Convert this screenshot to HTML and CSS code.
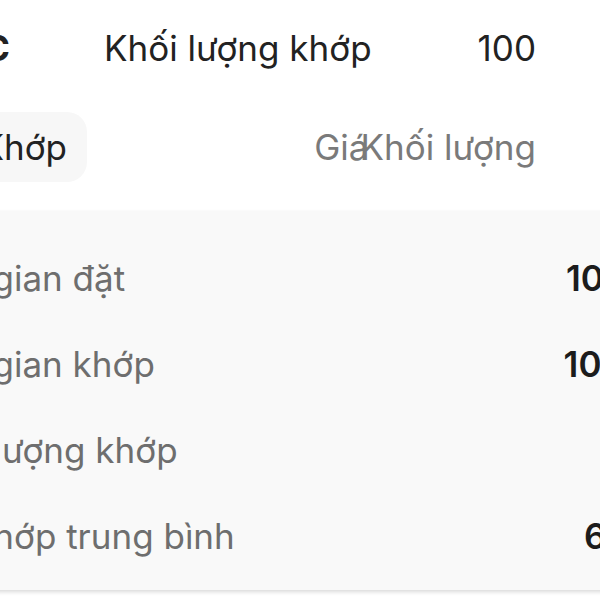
FILE: index.html
```html
<!DOCTYPE html>
<html lang="vi">
<head>
<meta charset="utf-8">
<link rel="stylesheet" href="styles.css">
</head>
<body>
<div class="screen">
  <div class="top-row">
    <span class="symbol">VIC</span>
    <span class="top-label">Khối lượng khớp</span>
    <span class="top-value">100</span>
  </div>
  <div class="tab-row">
    <div class="pill">Khớp</div>
    <div class="cols"><span class="col-price">Giá</span><span class="col-vol">Khối lượng</span></div>
  </div>
  <div class="panel">
    <div class="prow"><span class="plabel">Thời gian đặt</span><span class="pvalue">10:15:32</span></div>
    <div class="prow"><span class="plabel">Thời gian khớp</span><span class="pvalue">10:15:40</span></div>
    <div class="prow"><span class="plabel">Khối lượng khớp</span><span class="pvalue"></span></div>
    <div class="prow"><span class="plabel">Giá khớp trung bình</span><span class="pvalue">65.000</span></div>
  </div>
</div>
</body>
</html>
```
FILE: styles.css
```css
html, body {
  margin: 0;
  padding: 0;
  background: #ffffff;
  overflow: hidden;
  width: 600px;
  height: 600px;
}
.screen {
  margin-left: -100px;
  width: 800px;
  font-family: Inter, "Noto Sans", sans-serif;
  font-size: 35px;
  color: #222222;
}
.top-row {
  display: flex;
  height: 96px;
  line-height: 96px;
}
.symbol {
  width: 110px;
  text-align: right;
  font-weight: 700;
  flex: none;
}
.top-label {
  margin-left: 94px;
  flex: none;
}
.top-value {
  margin-left: auto;
  margin-right: 164px;
}
.tab-row {
  display: flex;
  margin-top: 16px;
  height: 70px;
  line-height: 70px;
}
.pill {
  background: #f7f7f7;
  border-radius: 20px;
  width: 187px;
  box-sizing: border-box;
  padding-right: 20px;
  text-align: right;
}
.cols {
  margin-left: auto;
  margin-right: 164px;
  display: flex;
  color: #7a7a7a;
}
.col-price {
  margin-right: -8px;
}
.panel {
  margin-top: 29px;
  background: #f9f9f9;
  height: 379px;
  box-shadow: 0 2px 4px rgba(0, 0, 0, 0.15);
  padding-top: 24px;
  box-sizing: border-box;
}
.prow {
  display: flex;
  height: 86px;
  line-height: 86px;
  padding-left: 10px;
}
.plabel {
  color: #6e6e6e;
}
.pvalue {
  margin-left: auto;
  margin-right: -7px;
  font-weight: 600;
  color: #1c1c1c;
}
```
